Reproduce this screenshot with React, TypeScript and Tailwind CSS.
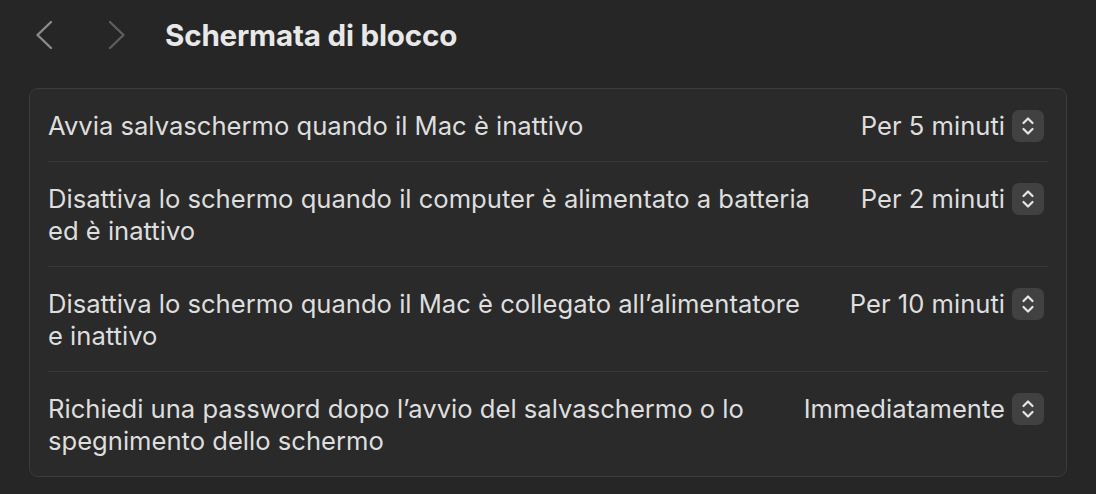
const rows = [
  { label: ['Avvia salvaschermo quando il Mac è inattivo'], value: 'Per 5 minuti' },
  { label: ['Disattiva lo schermo quando il computer è alimentato a batteria', 'ed è inattivo'], value: 'Per 2 minuti' },
  { label: ['Disattiva lo schermo quando il Mac è collegato all’alimentatore', 'e inattivo'], value: 'Per 10 minuti' },
  { label: ['Richiedi una password dopo l’avvio del salvaschermo o lo', 'spegnimento dello schermo'], value: 'Immediatamente' },
];

function Stepper() {
  return (
    <div className="flex h-8 w-8 items-center justify-center rounded-[7px] bg-[#414141]">
      <svg width="14" height="24" viewBox="0 0 14 24" fill="none" stroke="#e6e6e6" strokeWidth="2.2" strokeLinecap="round" strokeLinejoin="round">
        <path d="M2.5 9 L7 4.5 L11.5 9" />
        <path d="M2.5 15 L7 19.5 L11.5 15" />
      </svg>
    </div>
  );
}

export default function App() {
  return (
    <div className="h-[494px] w-[1096px] bg-[#262626] text-[#dedede]" style={{ fontFamily: 'Inter, "Noto Sans", sans-serif' }}>
      <div className="flex h-[70px] items-center pl-[35px]">
        <svg width="18" height="30" viewBox="0 0 18 30" fill="none" stroke="#8b8b8b" strokeWidth="2.4" strokeLinecap="round" strokeLinejoin="round">
          <path d="M16 2 L2.5 15 L16 28" />
        </svg>
        <svg className="ml-[55px]" width="18" height="30" viewBox="0 0 18 30" fill="none" stroke="#5e5e5e" strokeWidth="2.4" strokeLinecap="round" strokeLinejoin="round">
          <path d="M2 2 L15.5 15 L2 28" />
        </svg>
        <h1 className="ml-[39px] text-[29.6px] font-bold tracking-[-0.2px] text-[#e8e8e8]">Schermata di blocco</h1>
      </div>
      <div className="mx-[29px] mt-[18px] rounded-[9px] border border-[#3c3c3c] bg-[#2a2a2a] px-[18px]">
        {rows.map((row, i) => (
          <div key={i} className={`flex items-start justify-between pt-[21px] pb-[19px] ${i < rows.length - 1 ? 'border-b border-[#383838]' : ''}`}>
            <div className="text-[25.6px] leading-[32px]">
              {row.label.map((line, j) => (
                <div key={j}>{line}</div>
              ))}
            </div>
            <div className="flex items-center gap-[7px] pr-[4px]">
              <span className="text-[25.6px] leading-[32px]">{row.value}</span>
              <Stepper />
            </div>
          </div>
        ))}
      </div>
    </div>
  );
}
